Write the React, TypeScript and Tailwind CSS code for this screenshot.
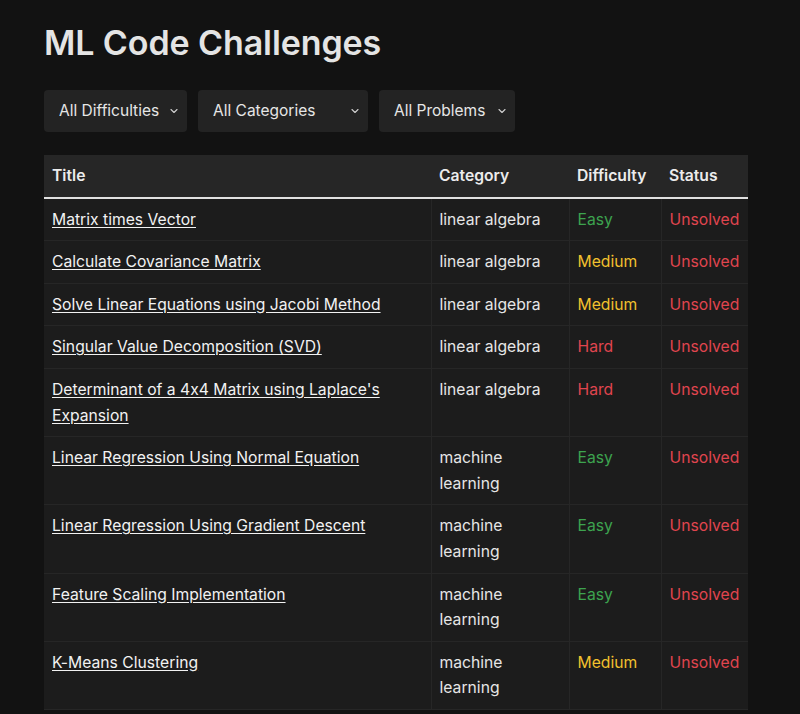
import { ChevronDown } from 'lucide-react';

type Row = {
  title: string;
  category: string;
  difficulty: 'Easy' | 'Medium' | 'Hard';
};

const rows: Row[] = [
  { title: 'Matrix times Vector', category: 'linear algebra', difficulty: 'Easy' },
  { title: 'Calculate Covariance Matrix', category: 'linear algebra', difficulty: 'Medium' },
  { title: 'Solve Linear Equations using Jacobi Method', category: 'linear algebra', difficulty: 'Medium' },
  { title: 'Singular Value Decomposition (SVD)', category: 'linear algebra', difficulty: 'Hard' },
  { title: "Determinant of a 4x4 Matrix using Laplace's Expansion", category: 'linear algebra', difficulty: 'Hard' },
  { title: 'Linear Regression Using Normal Equation', category: 'machine learning', difficulty: 'Easy' },
  { title: 'Linear Regression Using Gradient Descent', category: 'machine learning', difficulty: 'Easy' },
  { title: 'Feature Scaling Implementation', category: 'machine learning', difficulty: 'Easy' },
  { title: 'K-Means Clustering', category: 'machine learning', difficulty: 'Medium' },
];

const difficultyColor: Record<Row['difficulty'], string> = {
  Easy: 'text-[#3da34f]',
  Medium: 'text-[#f2c12e]',
  Hard: 'text-[#e0454f]',
};

function Filter({ label, width }: { label: string; width: string }) {
  return (
    <div className={`relative ${width}`}>
      <select className="h-[42px] w-full appearance-none rounded-[4px] bg-[#232323] pl-[15px] pr-[20px] text-[15.5px] text-[#e6e6e6] outline-none">
        <option>{label}</option>
      </select>
      <ChevronDown
        className="pointer-events-none absolute right-[7px] top-1/2 -translate-y-1/2 text-[#cfcfcf]"
        size={12}
        strokeWidth={2.2}
      />
    </div>
  );
}

export default function App() {
  return (
    <div
      className="min-h-screen bg-[#121212] px-[44px] pt-[21px] text-[#e6e6e6]"
      style={{ fontFamily: 'Inter, "Noto Sans", sans-serif', fontFeatureSettings: '"calt" 0' }}
    >
      <h1 className="text-[34px] font-semibold leading-[44px] tracking-[-0.1px] text-[#e4e4e4]">
        ML Code Challenges
      </h1>

      <div className="mt-[25px] flex gap-[11px]">
        <Filter label="All Difficulties" width="w-[143px]" />
        <Filter label="All Categories" width="w-[170px]" />
        <Filter label="All Problems" width="w-[136px]" />
      </div>

      <table className="mt-[23px] w-[704px] table-fixed border-collapse text-left text-[15.7px] leading-[25.6px]">
        <colgroup>
          <col className="w-[387px]" />
          <col className="w-[138px]" />
          <col className="w-[92px]" />
          <col className="w-[87px]" />
        </colgroup>
        <thead>
          <tr className="border-b-2 border-[#e0e0e0] bg-[#262626]">
            <th className="px-[8px] py-[8px] font-semibold text-[#ececec]">Title</th>
            <th className="px-[8px] py-[8px] font-semibold text-[#ececec]">Category</th>
            <th className="px-[8px] py-[8px] font-semibold text-[#ececec]">Difficulty</th>
            <th className="px-[8px] py-[8px] font-semibold text-[#ececec]">Status</th>
          </tr>
        </thead>
        <tbody className="bg-[#1c1c1c]">
          {rows.map((r) => (
            <tr key={r.title} className="border-b border-[#262626] align-top">
              <td className="border-r border-[#262626] px-[8px] py-[8px]">
                <a href="#" className="text-[#f2f2f2] underline underline-offset-2">
                  {r.title}
                </a>
              </td>
              <td className="border-r border-[#262626] px-[8px] py-[8px] text-[#e6e6e6]">{r.category}</td>
              <td className={`border-r border-[#262626] px-[8px] py-[8px] ${difficultyColor[r.difficulty]}`}>
                {r.difficulty}
              </td>
              <td className="px-[8px] py-[8px] text-[#e0454f]">Unsolved</td>
            </tr>
          ))}
        </tbody>
      </table>
    </div>
  );
}
